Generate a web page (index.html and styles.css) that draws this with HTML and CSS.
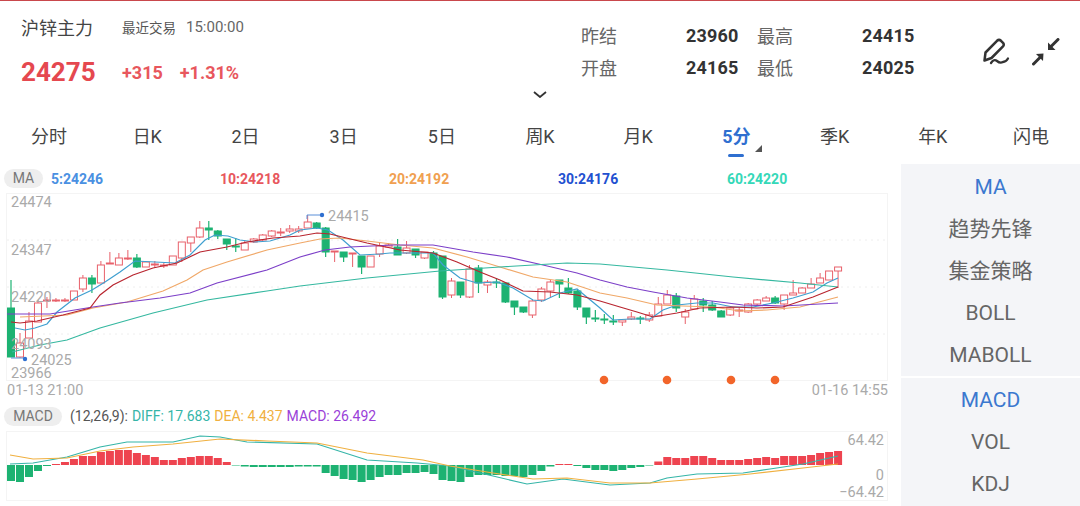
FILE: index.html
```html
<!DOCTYPE html>
<html>
<head>
    <title>沪锌主力</title>
    <meta name="viewport" content="width=device-width, initial-scale=1">
    <link rel="stylesheet" href="styles.css">
</head>
<body>
    <div class="topline"></div>
    <div class="header">
        <div class="quote">
            <div class="quote-name">
                <span class="name">沪锌主力</span>
                <span class="last-trade">最近交易</span>
                <span class="last-time">15:00:00</span>
            </div>
            <div class="quote-price">
                <span class="price">24275</span>
                <span class="change">+315</span>
                <span class="change">+1.31%</span>
            </div>
        </div>
        <div class="stats">
            <span class="stat-label">昨结</span><span class="stat-value">23960</span>
            <span class="stat-label">最高</span><span class="stat-value">24415</span>
            <span class="stat-label">开盘</span><span class="stat-value">24165</span>
            <span class="stat-label">最低</span><span class="stat-value">24025</span>
        </div>
        <div class="tools">
            <svg class="icon" viewBox="0 0 28 28">
                <path d="M2.5 14.5 L14 2.8 Q16 1 18 2.8 L20 4.8 Q21.5 6.8 20 8.3 L8.5 20 L1.5 22.5 Z" fill="none" stroke="#333" stroke-width="2.5" stroke-linejoin="round"/>
                <path d="M8 25 Q11 20.5 14 23 T20 24 Q23 24 25 20.5" fill="none" stroke="#333" stroke-width="2.3" stroke-linecap="round"/>
            </svg>
            <svg class="icon" viewBox="0 0 28 28">
                <path d="M26 1.5 L19 8.5" stroke="#333" stroke-width="3" stroke-linecap="round"/>
                <path d="M16 12 L16 4.5 L23.5 12 Z" fill="#333"/>
                <path d="M1.5 26 L8 19.5" stroke="#333" stroke-width="3" stroke-linecap="round"/>
                <path d="M11.5 15.5 L4 16 L11 23 Z" fill="#333"/>
            </svg>
        </div>
    </div>
    <div class="more">
        <svg class="chevron" viewBox="0 0 14 7"><path d="M1 1 L7 6 L13 1" fill="none" stroke="#333" stroke-width="1.8"/></svg>
    </div>
    <div class="tabs">
        <div class="tab">分时</div>
        <div class="tab">日K</div>
        <div class="tab">2日</div>
        <div class="tab">3日</div>
        <div class="tab">5日</div>
        <div class="tab">周K</div>
        <div class="tab">月K</div>
        <div class="tab tab-active">5分</div>
        <div class="tab">季K</div>
        <div class="tab">年K</div>
        <div class="tab">闪电</div>
    </div>
    <div class="main">
        <div class="charts">
            <div class="legend">
                <span class="pill pill-ma">MA</span>
                <span class="ma ma5">5:24246</span>
                <span class="ma ma10">10:24218</span>
                <span class="ma ma20">20:24192</span>
                <span class="ma ma30">30:24176</span>
                <span class="ma ma60">60:24220</span>
            </div>
            <svg id="kline" class="chart-k" viewBox="0 193 900 205">
                <rect class="frame" x="6.5" y="193.5" width="881" height="187"/>
                <line class="grid" x1="7" y1="240" x2="887" y2="240"/>
                <line class="grid" x1="7" y1="287" x2="887" y2="287"/>
                <line class="grid" x1="7" y1="334" x2="887" y2="334"/>
                <g id="candles"></g>
                <g id="malines"></g>
                <path d="M307 219 V215 H322" class="pointer"/>
                <circle cx="322" cy="215" r="2.2" fill="#2f6fd0"/>
                <path d="M11 358 H25" class="pointer"/>
                <circle cx="25" cy="359" r="2.2" fill="#2f6fd0"/>
                <text class="axis" x="328" y="221">24415</text>
                <text class="axis" x="31" y="365">24025</text>
                <text class="axis" x="11" y="207">24474</text>
                <text class="axis" x="11" y="255">24347</text>
                <text class="axis" x="11" y="302">24220</text>
                <text class="axis" x="11" y="349">24093</text>
                <text class="axis" x="11" y="378">23966</text>
                <circle class="dot" cx="604" cy="380" r="4.3"/>
                <circle class="dot" cx="667" cy="380" r="4.3"/>
                <circle class="dot" cx="731" cy="380" r="4.3"/>
                <circle class="dot" cx="775" cy="380" r="4.3"/>
                <text class="axis" x="7" y="395">01-13 21:00</text>
                <text class="axis" x="888" y="395" text-anchor="end">01-16 14:55</text>
            </svg>
            <div class="legend legend-macd">
                <span class="pill pill-macd">MACD</span>
                <span class="macd-text macd-params">(12,26,9):</span>
                <span class="macd-text macd-diff">DIFF: 17.683</span>
                <span class="macd-text macd-dea">DEA: 4.437</span>
                <span class="macd-text macd-val">MACD: 26.492</span>
            </div>
            <svg id="macd" class="chart-macd" viewBox="0 431 900 75">
                <rect class="frame" x="6.5" y="431.5" width="881" height="69"/>
                <g id="bars"></g>
                <g id="macdlines"></g>
                <text class="axis" x="884" y="445" text-anchor="end">64.42</text>
                <text class="axis" x="884" y="480" text-anchor="end">0</text>
                <text class="axis" x="884" y="497" text-anchor="end">−64.42</text>
            </svg>
        </div>
        <div class="side">
            <div class="side-group side-top">
                <div class="side-item side-active">MA</div>
                <div class="side-item">趋势先锋</div>
                <div class="side-item">集金策略</div>
                <div class="side-item">BOLL</div>
                <div class="side-item">MABOLL</div>
            </div>
            <div class="side-group side-bottom">
                <div class="side-item side-active">MACD</div>
                <div class="side-item">VOL</div>
                <div class="side-item">KDJ</div>
            </div>
        </div>
    </div>
    <script src="chart.js"></script>
</body>
</html>
```

FILE: styles.css
```css
html {
	font-family: Roboto, "Noto Sans CJK SC", sans-serif;
}
body {
	margin: 0;
	width: 1080px;
	height: 506px;
	overflow: hidden;
	background-color: white;
}
.topline {
	height: 1px;
	background-color: #c9474c;
}
.header {
	display: flex;
	height: 88px;
}
.quote {
	width: 560px;
	padding: 14px 0 0 21px;
	box-sizing: content-box;
}
.quote-name {
	display: flex;
	align-items: center;
	height: 24px;
}
.name {
	width: 101px;
	font-size: 18px;
	color: #444;
}
.last-trade {
	width: 64px;
	font-size: 13.5px;
	color: #555;
}
.last-time {
	font-size: 15px;
	color: #666;
}
.quote-price {
	display: flex;
	align-items: center;
	height: 30px;
	margin-top: 18px;
}
.price {
	width: 101px;
	font-size: 26px;
	font-weight: 700;
	color: #e5484f;
}
.change {
	margin-right: 17px;
	font-size: 18px;
	font-weight: 700;
	color: #e8575d;
}
.stats {
	display: grid;
	grid-template-columns: 105px 71px 105px 70px;
	grid-auto-rows: 32px;
	align-items: center;
	margin-top: 18px;
	height: 64px;
}
.stat-label {
	font-size: 18px;
	color: #666;
}
.stat-value {
	font-size: 18px;
	font-weight: 700;
	color: #333;
	letter-spacing: 0.2px;
}
.tools {
	display: flex;
	gap: 21px;
	margin: 37px 0 0 51px;
}
.icon {
	width: 28px;
	height: 28px;
}
.more {
	display: flex;
	justify-content: center;
	height: 14px;
}
.chevron {
	width: 14px;
	height: 7px;
	margin-top: 2px;
}
.tabs {
	display: flex;
	height: 61px;
}
.tab {
	position: relative;
	flex: 1;
	padding-top: 22px;
	height: 24px;
	line-height: 24px;
	text-align: center;
	font-size: 18px;
	color: #444;
}
.tab-active {
	font-weight: 700;
	color: #2f6fd0;
}
.tab-active::before {
	content: "";
	position: absolute;
	left: 41px;
	top: 51px;
	width: 16px;
	height: 3px;
	border-radius: 2px;
	background-color: #2f6fd0;
}
.tab-active::after {
	content: "";
	position: absolute;
	left: 68px;
	top: 42px;
	border-left: 7px solid transparent;
	border-bottom: 7px solid #555;
}
.main {
	display: flex;
	height: 342px;
}
.charts {
	width: 900px;
}
.legend {
	display: flex;
	align-items: center;
	height: 29px;
	padding-left: 4px;
}
.legend-macd {
	height: 33px;
	padding-top: 3px;
	box-sizing: border-box;
}
.pill {
	height: 19px;
	line-height: 19px;
	border-radius: 10px;
	text-align: center;
	font-size: 14px;
	color: #777;
	background-color: #eeeeee;
}
.pill-ma {
	width: 39px;
	margin-right: 8px;
}
.pill-macd {
	width: 58px;
	margin-right: 8px;
}
.ma {
	width: 169px;
	font-size: 14px;
	font-weight: 700;
}
.ma5 { color: #4a90e2; }
.ma10 { color: #e8575d; }
.ma20 { color: #f0a050; }
.ma30 { color: #2250d0; }
.ma60 { color: #35d8b8; }
.macd-text {
	margin-right: 4px;
	font-size: 14px;
}
.macd-params { color: #555; }
.macd-diff { color: #35b5a8; }
.macd-dea { color: #f0b040; }
.macd-val { color: #9a3fd8; }
.chart-k {
	display: block;
	width: 900px;
	height: 205px;
}
.chart-macd {
	display: block;
	width: 900px;
	height: 75px;
}
.frame {
	fill: white;
	stroke: #f4f4f4;
}
.grid {
	stroke: #eeeeee;
	stroke-dasharray: 2 4;
}
.axis {
	font-size: 14.5px;
	fill: #aaaaaa;
}
.dot {
	fill: #f2652a;
}
.pointer {
	fill: none;
	stroke: #5a8fd8;
}
.side {
	width: 179px;
	margin-left: 1px;
}
.side-group {
	box-sizing: border-box;
	background-color: #f4f5f8;
}
.side-top {
	height: 212px;
	padding-top: 2px;
}
.side-bottom {
	height: 128px;
	margin-top: 2px;
	padding-top: 1px;
}
.side-item {
	height: 42px;
	line-height: 42px;
	text-align: center;
	font-size: 21px;
	color: #666;
}
.side-active {
	color: #3b78cf;
}
```

FILE: chart.js
```js
var NS = "http://www.w3.org/2000/svg";
var STEP = 8.99;

// hi, body top, body bottom, lo, 1 = up (red) / 0 = down (green), in page pixels
var candles = [
	[280,308,357,357,0],[333,343,357,358,1],[312,321,338,338,1],[300,303,322,322,1],[297,300,301,308,1],
	[298,300,301,302,1],[298,300,301,302,1],[291,291,300,300,1],[275,278,289,292,1],[275,278,284,293,0],
	[261,265,283,283,1],[252,263,264,264,1],[253,258,265,265,1],[250,258,259,260,1],[254,258,267,268,0],
	[261,262,267,267,1],[261,264,265,268,1],[263,265,266,268,1],[256,256,265,265,1],[242,242,258,262,1],
	[237,237,243,252,1],[221,228,237,238,1],[221,228,230,240,0],[230,231,236,239,0],[239,239,244,250,0],
	[238,246,247,252,0],[240,243,250,250,1],[238,239,242,243,1],[234,235,240,241,1],[230,231,236,237,1],
	[228,232,233,236,1],[225,229,231,233,1],[226,229,231,233,1],[215,222,228,228,1],[222,223,228,229,0],
	[227,228,252,257,0],[251,251,252,262,1],[252,252,257,262,0],[253,253,254,267,1],[256,256,267,274,0],
	[256,256,267,267,1],[243,246,254,257,1],[243,245,247,248,1],[239,247,255,255,0],[241,248,253,254,1],
	[249,249,255,258,0],[252,252,258,259,1],[251,253,268,268,0],[256,256,297,299,0],[278,281,295,298,1],
	[282,282,295,298,0],[265,269,297,298,1],[265,268,283,293,0],[280,282,285,293,1],[278,282,283,288,0],
	[283,283,302,303,0],[301,301,307,315,0],[307,307,312,313,0],[300,301,315,318,1],[287,289,300,302,1],
	[280,282,291,297,1],[280,280,284,298,0],[278,288,293,294,0],[290,291,307,310,0],[308,308,317,324,0],
	[310,318,319,322,0],[314,319,320,324,0],[315,321,322,325,0],[319,320,322,326,1],[312,317,319,320,1],
	[316,318,319,324,0],[312,315,320,322,1],[297,304,316,316,1],[290,295,304,304,1],[293,296,308,312,0],
	[309,312,317,324,1],[295,299,309,309,1],[298,301,305,312,0],[301,305,310,311,0],[310,311,317,317,0],
	[307,308,315,316,1],[307,310,311,317,1],[303,304,312,313,1],[299,300,304,305,1],[296,298,301,301,1],
	[296,298,303,304,0],[295,295,304,310,1],[280,293,295,295,1],[287,288,293,293,1],[278,284,288,288,1],
	[273,278,283,283,1],[271,271,280,280,1],[267,267,271,288,1]
];

var maLines = [
	{color: "#3f9fd0", pts: "15,328 25,330 35,328 47,324 57,312 75,298 92,290 105,282 120,272 135,261 155,262 175,263 190,255 205,240 215,235 228,236 240,240 255,242 270,241 290,235 300,230 317,228 328,230 343,240 360,255 380,254 390,253 417,253 433,253 443,265 460,278 477,283 497,282 513,288 533,300 543,301 560,293 577,289 600,308 613,320 630,319 650,319 663,310 677,305 697,303 713,303 733,307 753,307 773,303 793,298 813,292 827,283 838,278"},
	{color: "#f0a868", pts: "20,317 67,315 93,308 127,302 163,291 187,280 203,270 227,262 267,250 300,243 320,239 340,238 367,241 400,245 433,248 467,257 500,267 533,277 567,282 600,293 627,298 657,305 683,306 713,307 740,311 767,310 800,307 838,297"},
	{color: "#7c3fc8", pts: "7,314 50,314 93,307 120,303 160,298 190,293 217,283 267,270 300,257 325,250 350,247 393,245 433,245 473,252 507,257 543,265 577,273 600,280 627,287 653,292 687,298 720,302 743,305 783,306 838,303"},
	{color: "#35b8a0", pts: "12,352 40,345 67,340 100,328 153,313 207,300 267,291 300,286 367,278 440,271 500,267 567,263 600,264 667,270 733,277 800,283 838,287"},
	{color: "#b8252f", pts: "11,322 20,323 37,321 63,315 90,308 100,295 113,285 133,275 153,268 177,263 200,252 227,247 247,242 273,238 300,236 317,233 330,234 367,243 400,250 433,253 457,262 480,272 500,280 523,291 550,292 577,295 600,301 620,307 637,312 653,317 677,313 700,308 733,307 757,308 783,307 813,297 838,287"}
];

var macdBars = [
	-16,-17,-12,-6,-1,1,3,6,9,9,13,14,15,15,12,10,8,5,5,7,8,9,9,7,3,-0.5,-1.5,-2,-2,-2,-2,-2,-1.5,-1.5,-1.5,
	-8,-11,-14,-15,-17,-15,-12,-10,-10,-8,-8,-7,-9,-15,-16,-17,-12,-10,-10,-10,-11,-11,-12,-10,-6,-1.5,1,1,-1,
	-3,-5,-5,-6,-5,-3,-2,-0.5,3.5,8,7,7,9,9,7,5,5,5,6,7,8,7,9,9,9,10,12,13,14
];

var macdLines = [
	{color: "#35b5a8", pts: "10,464 33,463 67,457 100,447 127,442 173,442 200,436 220,437 247,442 317,444 367,460 417,463 450,466 493,476 527,484 563,479 610,485 650,483 667,478 697,474 743,473 770,469 803,464 838,456"},
	{color: "#f0b040", pts: "10,455 33,459 67,458 100,451 133,447 173,444 220,439 267,441 317,443 367,453 423,460 450,466 493,473 533,479 567,478 610,483 650,483 697,479 750,474 803,468 838,464"}
];

function el(parent, name, attrs) {
	var node = document.createElementNS(NS, name);
	for (var key in attrs) {
		node.setAttribute(key, attrs[key]);
	}
	parent.appendChild(node);
	return node;
}

function drawCandles() {
	var g = document.getElementById("candles");
	for (var i = 0; i < candles.length; i++) {
		var c = candles[i];
		var x = 11 + STEP * i;
		var color = c[4] ? "#e8606a" : "#1db272";
		el(g, "line", {x1: x, x2: x, y1: c[0], y2: c[3], stroke: color, "stroke-width": c[4] ? 1 : 1.2});
		el(g, "rect", {
			x: x - 3.5,
			y: c[1],
			width: 7,
			height: Math.max(c[2] - c[1], 1),
			fill: c[4] ? "white" : color,
			stroke: color
		});
	}
}

function drawLines(id, lines) {
	var g = document.getElementById(id);
	for (var i = 0; i < lines.length; i++) {
		el(g, "polyline", {points: lines[i].pts, fill: "none", stroke: lines[i].color, "stroke-width": 1.2});
	}
}

function drawBars() {
	var g = document.getElementById("bars");
	for (var i = 0; i < macdBars.length; i++) {
		var v = macdBars[i];
		el(g, "rect", {
			x: 11 + STEP * i - 4,
			y: v > 0 ? 465 - v : 465,
			width: 8,
			height: Math.abs(v),
			fill: v > 0 ? "#ee4450" : "#1db272"
		});
	}
}

drawCandles();
drawLines("malines", maLines);
drawBars();
drawLines("macdlines", macdLines);
```
